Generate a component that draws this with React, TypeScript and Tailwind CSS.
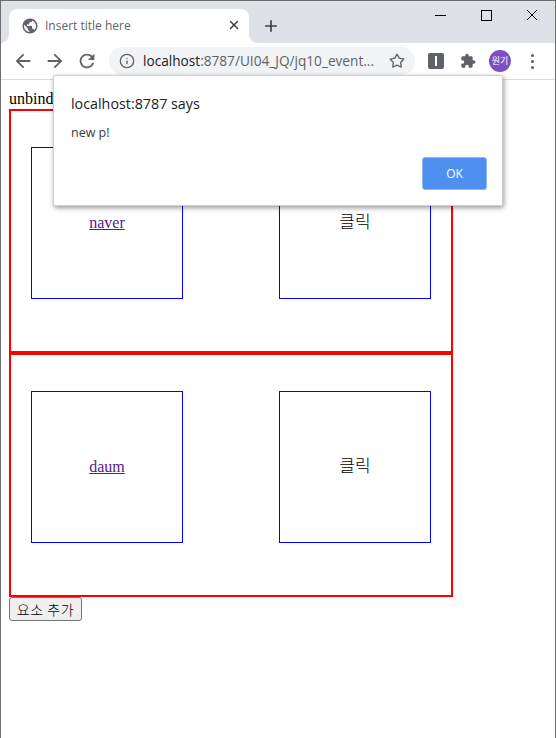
import { Info, Plus, Star, X } from 'lucide-react';

const globePath =
  'M12 2C6.48 2 2 6.48 2 12s4.48 10 10 10 10-4.48 10-10S17.52 2 12 2zm-1 17.93c-3.95-.49-7-3.85-7-7.93 0-.62.08-1.21.21-1.79L9 15v1c0 1.1.9 2 2 2v1.93zm6.9-2.54c-.26-.81-1-1.39-1.9-1.39h-1v-3c0-.55-.45-1-1-1H8v-2h2c.55 0 1-.45 1-1V7h2c1.1 0 2-.9 2-2v-.41c2.93 1.19 5 4.06 5 7.41 0 2.08-.8 3.97-2.1 5.39z';
const backPath = 'M20 11H7.83l5.59-5.59L12 4l-8 8 8 8 1.41-1.41L7.83 13H20v-2z';
const forwardPath = 'M4 11h12.17l-5.59-5.59L12 4l8 8-8 8-1.41-1.41L16.17 13H4v-2z';
const reloadPath =
  'M17.65 6.35C16.2 4.9 14.21 4 12 4c-4.42 0-7.99 3.58-7.99 8s3.57 8 7.99 8c3.73 0 6.84-2.55 7.73-6h-2.08c-.82 2.33-3.04 4-5.65 4-3.31 0-6-2.69-6-6s2.69-6 6-6c1.66 0 3.14.69 4.22 1.78L13 11h7V4l-2.35 2.35z';
const puzzlePath =
  'M20.5 11H19V7c0-1.1-.9-2-2-2h-4V3.5C13 2.12 11.88 1 10.5 1S8 2.12 8 3.5V5H4c-1.1 0-1.99.9-1.99 2v3.8H3.5c1.49 0 2.7 1.21 2.7 2.7s-1.21 2.7-2.7 2.7H2V20c0 1.1.9 2 2 2h3.8v-1.5c0-1.49 1.21-2.7 2.7-2.7 1.49 0 2.7 1.21 2.7 2.7V22H17c1.1 0 2-.9 2-2v-4h1.5c1.38 0 2.5-1.12 2.5-2.5S21.88 11 20.5 11z';

function FilledIcon({ d, size = 24 }: { d: string; size?: number }) {
  return (
    <svg width={size} height={size} viewBox="0 0 24 24" className="fill-[#5f6368] shrink-0">
      <path d={d} />
    </svg>
  );
}

function WindowControls() {
  return (
    <div className="ml-auto self-start flex items-center h-[12px] mt-[8px] mr-[17px] text-black">
      <svg width="11" height="11" viewBox="0 0 11 11" className="mr-[35px]">
        <path d="M0 5.5h11" stroke="currentColor" strokeWidth="1" />
      </svg>
      <svg width="11" height="11" viewBox="0 0 11 11" className="mr-[34px]">
        <rect x="0.5" y="0.5" width="10" height="10" fill="none" stroke="currentColor" strokeWidth="1" />
      </svg>
      <svg width="12" height="12" viewBox="0 0 12 12">
        <path d="M1 1l10 10M11 1L1 11" stroke="currentColor" strokeWidth="1" />
      </svg>
    </div>
  );
}

function BrowserChrome() {
  return (
    <>
      <div className="h-[42px] bg-[#dee1e6] flex items-end pl-2 shrink-0">
        <div className="relative w-[240px] h-[34px] bg-white rounded-t-[8px] flex items-center pl-3 pr-2">
          <span className="absolute -left-2 bottom-0 w-2 h-2 bg-[radial-gradient(circle_at_0_0,#dee1e6_7.5px,white_8px)]" />
          <span className="absolute -right-2 bottom-0 w-2 h-2 bg-[radial-gradient(circle_at_100%_0,#dee1e6_7.5px,white_8px)]" />
          <FilledIcon d={globePath} size={18} />
          <span className="ml-[6px] text-[12px] text-[#5f6368] font-['Open_Sans',sans-serif] flex-1">Insert title here</span>
          <X className="w-[14px] h-[14px] text-[#3c4043] -mt-[2px]" strokeWidth={2.5} />
        </div>
        <Plus className="w-[18px] h-[18px] ml-[13px] mb-[8px] text-[#3c4043]" strokeWidth={2.2} />
        <WindowControls />
      </div>
      <div className="h-[37px] bg-white border-b border-[#dadce0] flex items-center pl-[11px] shrink-0">
        <FilledIcon d={backPath} size={22} />
        <div className="ml-[10px]">
          <FilledIcon d={forwardPath} size={22} />
        </div>
        <div className="ml-[10px]">
          <FilledIcon d={reloadPath} size={22} />
        </div>
        <div className="ml-[11px] w-[306px] h-[28px] rounded-full bg-[#f1f3f4] flex items-center pl-[10px]">
          <Info className="w-[16px] h-[16px] text-[#5f6368]" strokeWidth={2} />
          <span className="ml-[8px] text-[13.65px] font-['Open_Sans',sans-serif] whitespace-nowrap text-[#202124]">
            localhost<span className="text-[#5f6368]">:8787/UI04_JQ/jq10_event...</span>
          </span>
          <Star className="w-[16px] h-[16px] ml-auto mr-[10px] text-[#5f6368]" strokeWidth={2} />
        </div>
        <div className="ml-[13px] w-[16px] h-[16px] rounded-[2px] bg-[#5f6368] flex items-center justify-center">
          <div className="w-[2px] h-[10px] bg-white" />
        </div>
        <div className="ml-[16px]">
          <FilledIcon d={puzzlePath} size={16} />
        </div>
        <div className="ml-[13px] w-[22px] h-[22px] rounded-full bg-[#7e4fc2] flex items-center justify-center text-white text-[9px] font-['Noto_Sans_CJK_KR',sans-serif]">
          원기
        </div>
        <div className="ml-[20px] flex flex-col gap-[3px]">
          <div className="w-[3px] h-[3px] rounded-full bg-[#5f6368]" />
          <div className="w-[3px] h-[3px] rounded-full bg-[#5f6368]" />
          <div className="w-[3px] h-[3px] rounded-full bg-[#5f6368]" />
        </div>
      </div>
    </>
  );
}

function Cell({ children }: { children: React.ReactNode }) {
  return (
    <div className="w-[152px] h-[152px] border border-[#0000ff] flex items-center justify-center">
      {children}
    </div>
  );
}

function Row({ link }: { link: string }) {
  return (
    <div className="w-[444px] h-[244px] border-2 border-[#ff0000] flex justify-between items-start px-5 pt-9">
      <Cell>
        <a href="#" className="underline text-[#551a8b]">
          {link}
        </a>
      </Cell>
      <Cell>
        <span className="font-['Noto_Sans_CJK_KR',sans-serif] font-light text-[17px] text-black pb-1">클릭</span>
      </Cell>
    </div>
  );
}

function AlertDialog() {
  return (
    <div className="absolute left-[52px] top-[74px] w-[450px] h-[131px] bg-white rounded-[2px] border border-[#d0d0d0] shadow-[1px_2px_5px_rgba(0,0,0,0.4)] font-['Open_Sans',sans-serif]">
      <div className="pl-[17px] pt-[17px] text-[14.3px] leading-[22px] text-[#202124]">localhost:8787 says</div>
      <div className="pl-[17px] pt-[9px] text-[12.5px] leading-[18px] text-[#3c4043]">new p!</div>
      <div className="flex justify-end pr-[15px] pt-[15px]">
        <button className="w-[65px] h-[33px] rounded-[3px] bg-[#4d90f0] border border-[#8fb9f5] text-white text-[12px]">OK</button>
      </div>
    </div>
  );
}

export default function App() {
  return (
    <div className="relative w-[556px] h-[738px] bg-white border-l border-t border-r border-[#6e6e6e] flex flex-col overflow-hidden font-['Liberation_Serif',serif] text-[16px] text-black">
      <BrowserChrome />
      <div className="pl-2 pt-[9px] flex flex-col items-start">
        <div className="leading-[20px]">unbind</div>
        <Row link="naver" />
        <Row link="daum" />
        <button className="w-[73px] h-[24px] bg-[#efefef] border border-[#767676] rounded-[3px] text-[14px] font-light tracking-[0.6px] font-['Noto_Sans_CJK_KR',sans-serif]">
          요소 추가
        </button>
      </div>
      <AlertDialog />
    </div>
  );
}
